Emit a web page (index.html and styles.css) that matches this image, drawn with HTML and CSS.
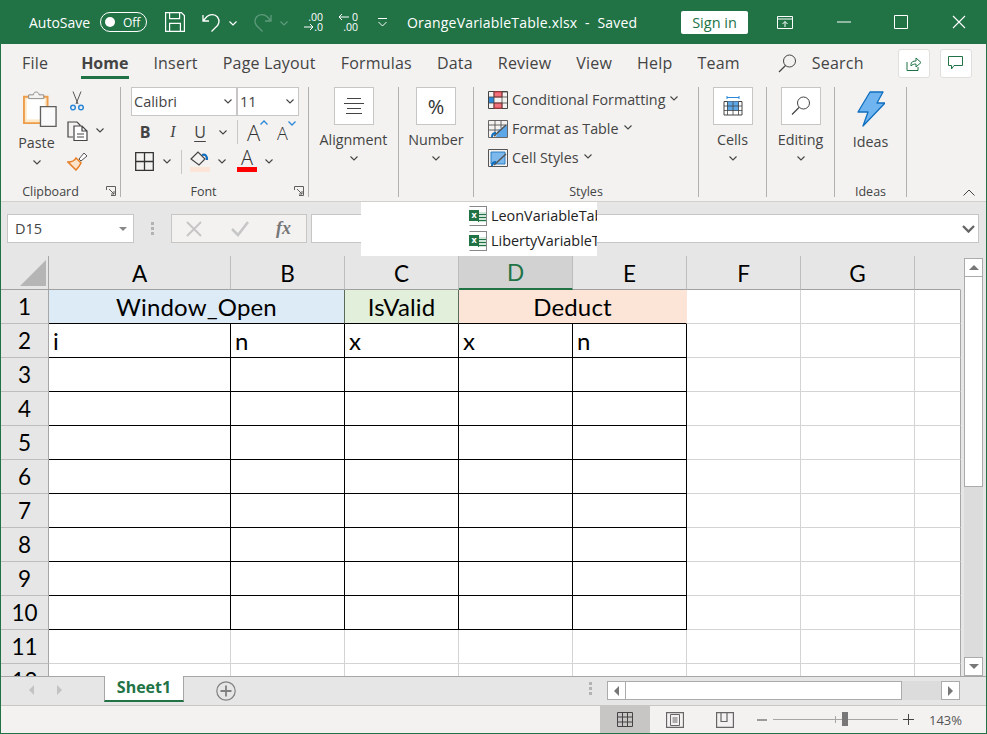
FILE: index.html
```html
<!DOCTYPE html>
<html lang="en">
<head>
<meta charset="utf-8">
<title>OrangeVariableTable.xlsx - Saved</title>
<link rel="stylesheet" href="styles.css">
</head>
<body>
<div class="app">
  <header class="titlebar">
    <span class="autosave">AutoSave</span>
    <span class="toggle"><i class="toggle-dot"></i><span>Off</span></span>
    <svg class="qa-save" width="20" height="20" viewBox="0 0 20 20" fill="none" stroke="#fff" stroke-width="1.2"><path d="M.6.6h15.8l3 3v15.8H.6zM4.6.6v6h10v-6M4.6 19.4v-8h10.800v8"/></svg>
    <svg class="qa-undo" width="19" height="20" viewBox="0 0 19 20" fill="none" stroke="#fff" stroke-width="1.3"><path d="M1 3v6h6M1.500 8.500 5 4.500C8 2 13 2 15.500 5c3 4 1 8-1.500 10l-4.500 4.500"/></svg>
    <svg class="chev-qa" width="8" height="5" viewBox="0 0 8 5" fill="none" stroke="#fff" stroke-width="1.200"><path d="M.5.5 4 4 7.500.5"/></svg>
    <svg class="qa-redo" width="19" height="20" viewBox="0 0 19 20" fill="none" stroke="#5f9a7c" stroke-width="1.300"><path d="M18 3v6h-6M17.500 8.500 14 4.500C11 2 6 2 3.500 5c-3 4-1 8 1.500 10l4.500 4.500"/></svg>
    <svg class="chev-qa" width="8" height="5" viewBox="0 0 8 5" fill="none" stroke="#5f9a7c" stroke-width="1.200"><path d="M.5.5 4 4 7.500.5"/></svg>
    <span class="qa-dec qa-dec1">
      <span class="qa-line">.00</span>
      <span class="qa-line"><svg width="10" height="8" viewBox="0 0 10 8" fill="none" stroke="#fff"><path d="M0 4h9M6 1l3 3-3 3"/></svg>.0</span>
    </span>
    <span class="qa-dec qa-dec2">
      <span class="qa-line"><svg width="11" height="8" viewBox="0 0 11 8" fill="none" stroke="#fff"><path d="M11 4H1M4 1 1 4l3 3"/></svg>&nbsp;0</span>
      <span class="qa-line">.00</span>
    </span>
    <svg class="qa-more" width="11" height="9" viewBox="0 0 11 9" fill="none" stroke="#fff"><path d="M1 .5h9M1.500 4l4 4 4-4"/></svg>
    <span class="doc-title">OrangeVariableTable.xlsx&nbsp; - &nbsp;Saved</span>
    <span class="signin">Sign in</span>
    <svg class="win-ribbon" width="16" height="13" viewBox="0 0 16 13" fill="none" stroke="#fff"><path d="M.5.500h15v12H.5zM.5 3h15M8 11V5.500M5.500 8 8 5.500 10.500 8"/></svg>
    <svg class="win-min" width="14" height="2" viewBox="0 0 14 2"><path d="M0 1h14" stroke="#fff"/></svg>
    <svg class="win-max" width="14" height="14" viewBox="0 0 14 14" fill="none" stroke="#fff"><path d="M.5.500h13v13H.5z"/></svg>
    <svg class="win-close" width="14" height="14" viewBox="0 0 14 14" fill="none" stroke="#fff" stroke-width="1.100"><path d="m1 1 12 12M13 1 1 13"/></svg>
  </header>

  <nav class="tabs">
    <span class="tab tab-file">File</span>
    <span class="tab tab-on">Home</span>
    <span class="tab">Insert</span>
    <span class="tab">Page Layout</span>
    <span class="tab">Formulas</span>
    <span class="tab">Data</span>
    <span class="tab">Review</span>
    <span class="tab">View</span>
    <span class="tab">Help</span>
    <span class="tab">Team</span>
    <svg class="tab-search-ic" width="19" height="19" viewBox="0 0 19 19" fill="none" stroke="#444"><circle cx="11.500" cy="7" r="6"/><path d="M7.500 11.500 1 18" stroke-width="1.300"/></svg>
    <span class="tab tab-search">Search</span>
    <span class="tab-btn tab-btn-share"><svg width="16" height="15" viewBox="0 0 16 15" fill="none" stroke="#217346"><path d="M1 6v8.500h11V11M5 10V8.500C5 6 7 5 10 5V2l5 4.500-5 4.500V8C8 8 6 8.500 5 10z"/></svg></span>
    <span class="tab-btn"><svg width="15" height="14" viewBox="0 0 15 14" fill="none" stroke="#217346"><path d="M.5.500h14v9H6L3.500 13V9.500h-3z"/></svg></span>
  </nav>

  <section class="ribbon">
    <div class="group g-clip">
      <div class="gbody clip-body">
        <div class="paste">
          <svg class="ic-paste" width="34" height="36" viewBox="0 0 36 38"><path d="M1 6h25v28H1z" fill="#fde9c8" stroke="#ed9c4a" stroke-width="2"/><path d="M4 8h19v22H4z" fill="#fff"/><path d="M6 8V4h5c0-4 6-4 6 0h5v4z" fill="#f3f2f1" stroke="#8a8886"/><path d="M18.500 16.500h16.500v21H18.500z" fill="#fafafa" stroke="#605e5c" stroke-width="1.400"/></svg>
          <span class="rtext paste-text">Paste</span>
          <svg class="chev" width="8" height="5" viewBox="0 0 8 5"><path d="M.5.500 4 4 7.500.500"/></svg>
        </div>
        <div class="clip-tools">
          <svg class="ic-cut" width="14" height="20" viewBox="0 0 14 20" fill="none"><path d="M3 .5 8 13M11 .5 6 13" stroke="#555"/><circle cx="3" cy="16.500" r="2.300" stroke="#2b88d8" stroke-width="1.500"/><circle cx="11" cy="16.500" r="2.300" stroke="#2b88d8" stroke-width="1.500"/></svg>
          <div class="copy-row">
            <svg width="21" height="20" viewBox="0 0 21 20" fill="#f3f2f1" stroke="#444" stroke-width="1.200"><path d="M6 16H1V1h9l3 3v3"/><path d="M7 5h8l5 5v9.500H7zM15 5v5h5" fill="#fff"/><path d="M10 13h7M10 16h7" stroke-width="1"/></svg>
            <svg class="chev" width="8" height="5" viewBox="0 0 8 5"><path d="M.5.500 4 4 7.500.500"/></svg>
          </div>
          <svg width="21" height="20" viewBox="0 0 21 20"><path d="M1 11c4 0 7-2 8-4l5 5c-1 2-3 5-5 7z" fill="#fbe3cc" stroke="#e8802a" stroke-width="1.600"/><path d="m12 8 5-6 3 3-6 5z" fill="#fff" stroke="#555"/></svg>
        </div>
      </div>
      <div class="glabel-row">
        <span class="glabel">Clipboard</span>
        <svg class="launcher" width="10" height="10" viewBox="0 0 10 10" fill="none" stroke="#605e5c"><path d="M.5 4V.5H9.500V9.500H5M3 3l5 5M8 5v3H5"/></svg>
      </div>
    </div>

    <div class="group g-font">
      <div class="gbody font-body">
        <div class="font-row1">
          <span class="select sel-name">Calibri<svg class="chev" width="8" height="5" viewBox="0 0 8 5"><path d="M.5.500 4 4 7.500.500"/></svg></span>
          <span class="select sel-size">11<svg class="chev" width="8" height="5" viewBox="0 0 8 5"><path d="M.5.500 4 4 7.500.500"/></svg></span>
        </div>
        <div class="font-row2">
          <span class="ft ft-b">B</span>
          <span class="ft ft-i">I</span>
          <span class="ft ft-u">U</span>
          <span class="ft-chev"><svg class="chev" width="8" height="5" viewBox="0 0 8 5"><path d="M.5.500 4 4 7.500.500"/></svg></span>
          <i class="vsep vsep-a"></i>
          <span class="ft-grow">A<svg width="8" height="5" viewBox="0 0 8 5" fill="none" stroke="#2b88d8" stroke-width="1.300"><path d="M.5 4.500 4 1l3.500 3.500"/></svg></span>
          <span class="ft-shrink">A<svg width="8" height="5" viewBox="0 0 8 5" fill="none" stroke="#2b88d8" stroke-width="1.300"><path d="M.5.500 4 4 7.500.500"/></svg></span>
        </div>
        <div class="font-row3">
          <svg class="ic-border" width="19" height="19" viewBox="0 0 19 19" fill="none" stroke="#333" stroke-width="1.300"><path d="M.7.700h17.600v17.600H.7zM9.500.7v17.600M.7 9.500h17.600"/></svg>
          <span class="ft-chev ch-border"><svg class="chev" width="8" height="5" viewBox="0 0 8 5"><path d="M.5.500 4 4 7.500.500"/></svg></span>
          <i class="vsep vsep-b"></i>
          <svg class="ic-fill" width="20" height="21" viewBox="0 0 20 21"><path d="m1 8 7-7 7 7-6 6z" fill="#f3f2f1" stroke="#444" stroke-width="1.200"/><path d="M12 4c3-1 5 0 5 5" fill="none" stroke="#106ebe" stroke-width="2.200"/><path d="M0 16h20v5H0z" fill="#fce4d6"/></svg>
          <span class="ft-chev ch-fill"><svg class="chev" width="8" height="5" viewBox="0 0 8 5"><path d="M.5.500 4 4 7.500.500"/></svg></span>
          <span class="ft-color">A<i class="color-bar"></i></span>
          <span class="ft-chev ch-color"><svg class="chev" width="8" height="5" viewBox="0 0 8 5"><path d="M.5.500 4 4 7.500.500"/></svg></span>
        </div>
      </div>
      <div class="glabel-row">
        <span class="glabel">Font</span>
        <svg class="launcher launcher-font" width="10" height="10" viewBox="0 0 10 10" fill="none" stroke="#605e5c"><path d="M.5 4V.5H9.500V9.500H5M3 3l5 5M8 5v3H5"/></svg>
      </div>
    </div>

    <div class="group g-align stack">
      <span class="bigbtn"><svg width="20" height="16" viewBox="0 0 20 16" stroke="#444"><path d="M3 .5h14M0 5.500h20M3 10.500h14M2 15.500h16"/></svg></span>
      <span class="rtext big-text">Alignment</span>
      <svg class="chev" width="8" height="5" viewBox="0 0 8 5"><path d="M.5.500 4 4 7.500.500"/></svg>
    </div>

    <div class="group g-num stack">
      <span class="bigbtn percent">%</span>
      <span class="rtext big-text">Number</span>
      <svg class="chev" width="8" height="5" viewBox="0 0 8 5"><path d="M.5.500 4 4 7.500.500"/></svg>
    </div>

    <div class="group g-styles">
      <div class="gbody styles-body">
        <div class="style-row">
          <svg width="20" height="18" viewBox="0 0 20 18" fill="none"><path d="M.5.500h19v17H.5z" stroke="#444"/><path d="M6 1h8v5H6zM6 12h8v5H6z" fill="#f1707b" stroke="#d13438"/><path d="M1 6h5v6H1z" fill="#2b88d8"/><path d="M14 1h5M1 6h18M1 12h18M6 1v16M14 1v16" stroke="#444" stroke-width=".8"/></svg>
          <span class="rtext">Conditional Formatting</span>
          <svg class="chev" width="8" height="5" viewBox="0 0 8 5"><path d="M.5.500 4 4 7.500.500"/></svg>
        </div>
        <div class="style-row">
          <svg width="20" height="18" viewBox="0 0 20 18" fill="none"><path d="M.5.500h19v17H.5zM.5 5h19M.5 10h12M7 .5v16M13 .5V8" stroke="#555" stroke-width=".9"/><path d="M10 10l9-5v12H8z" fill="#5ca7e8"/><path d="m6 16 12-11" stroke="#555" stroke-width="1.500"/><path d="M4 17c0-3 2-4 4-4" stroke="#106ebe" stroke-width="2"/></svg>
          <span class="rtext">Format as Table</span>
          <svg class="chev" width="8" height="5" viewBox="0 0 8 5"><path d="M.5.500 4 4 7.500.500"/></svg>
        </div>
        <div class="style-row">
          <svg width="20" height="18" viewBox="0 0 20 18" fill="none"><path d="M.5.500h19v17H.5z" stroke="#555"/><path d="M3 3h14v12H3z" fill="#7db8ec" stroke="#106ebe" stroke-width=".8"/><path d="m6 16 12-11" stroke="#555" stroke-width="1.500"/><path d="M4 17c0-3 2-4 4-4" stroke="#106ebe" stroke-width="2"/></svg>
          <span class="rtext">Cell Styles</span>
          <svg class="chev" width="8" height="5" viewBox="0 0 8 5"><path d="M.5.500 4 4 7.500.500"/></svg>
        </div>
      </div>
      <div class="glabel-row"><span class="glabel">Styles</span></div>
    </div>

    <div class="group g-small stack">
      <span class="bigbtn"><svg width="20" height="20" viewBox="0 0 20 20" fill="none"><path d="M1 5.500h18v13.500H1z" stroke="#444"/><path d="M4 5.500h12v9H4z" fill="#5ca7e8"/><path d="M1 10h18M1 14.500h18M4.500 5.500V19M10 5.500V19M15.500 5.500V19" stroke="#444" stroke-width=".8"/><path d="M4 1.500h12M4 0v3M16 0v3" stroke="#2b88d8"/></svg></span>
      <span class="rtext big-text">Cells</span>
      <svg class="chev" width="8" height="5" viewBox="0 0 8 5"><path d="M.5.500 4 4 7.500.500"/></svg>
    </div>

    <div class="group g-small stack">
      <span class="bigbtn"><svg width="20" height="20" viewBox="0 0 20 20" fill="none" stroke="#444"><circle cx="12.500" cy="7" r="6"/><path d="M8 11.500 1 18.500" stroke-width="1.300"/></svg></span>
      <span class="rtext big-text">Editing</span>
      <svg class="chev" width="8" height="5" viewBox="0 0 8 5"><path d="M.5.500 4 4 7.500.500"/></svg>
    </div>

    <div class="group g-ideas">
      <div class="gbody ideas-body">
        <svg width="28" height="36" viewBox="0 0 28 36"><path d="M13 1h13l-6 11h8L6 35l5-14H1z" fill="#71b5f0" stroke="#106ebe" stroke-width="1.300" stroke-linejoin="round"/></svg>
        <span class="rtext ideas-text">Ideas</span>
      </div>
      <div class="glabel-row"><span class="glabel">Ideas</span></div>
    </div>
    <svg class="collapse" width="12" height="7" viewBox="0 0 12 7" fill="none" stroke="#444"><path d="m.5 6.500 5.500-5.500 5.500 5.500"/></svg>
  </section>

  <section class="formula">
    <div class="namebox"><span>D15</span><i class="tri-down"></i></div>
    <div class="fdots"><i></i><i></i><i></i></div>
    <div class="fbtns">
      <svg width="16" height="16" viewBox="0 0 16 16" stroke="#c6c6c6" stroke-width="2"><path d="m1 1 14 14M15 1 1 15"/></svg>
      <svg width="18" height="16" viewBox="0 0 18 16" fill="none" stroke="#c6c6c6" stroke-width="2.500"><path d="m1 8 6 6L17 1"/></svg>
      <span class="fx">fx</span>
    </div>
    <div class="finput"><svg width="13" height="8" viewBox="0 0 13 8" fill="none" stroke="#666" stroke-width="2.400"><path d="m1 1 5.500 5.500L12 1"/></svg></div>
    <div class="file-pop">
      <div class="file-row"><span class="xl-ic"><span class="xl-x">x</span></span><span class="file-name">LeonVariableTable.xlsx</span></div>
      <div class="file-row"><span class="xl-ic"><span class="xl-x">x</span></span><span class="file-name">LibertyVariableTable.xlsx</span></div>
    </div>
  </section>

  <section class="sheet-area">
    <div class="grid">
      <div class="corner"><i class="corner-tri"></i></div>
      <div class="ch">A</div><div class="ch">B</div><div class="ch">C</div><div class="ch ch-sel">D</div><div class="ch">E</div><div class="ch">F</div><div class="ch">G</div><div class="ch ch-last"></div>

      <div class="rh">1</div>
      <div class="c head span2 blue">Window_Open</div><div class="c head green">IsValid</div><div class="c head span2 peach">Deduct</div><div class="c"></div><div class="c"></div><div class="c l"></div>

      <div class="rh">2</div>
      <div class="c k">i</div><div class="c k">n</div><div class="c k">x</div><div class="c k">x</div><div class="c k">n</div><div class="c"></div><div class="c"></div><div class="c l"></div>

      <div class="rh">3</div>
      <div class="c k"></div><div class="c k"></div><div class="c k"></div><div class="c k"></div><div class="c k"></div><div class="c"></div><div class="c"></div><div class="c l"></div>
      <div class="rh">4</div>
      <div class="c k"></div><div class="c k"></div><div class="c k"></div><div class="c k"></div><div class="c k"></div><div class="c"></div><div class="c"></div><div class="c l"></div>
      <div class="rh">5</div>
      <div class="c k"></div><div class="c k"></div><div class="c k"></div><div class="c k"></div><div class="c k"></div><div class="c"></div><div class="c"></div><div class="c l"></div>
      <div class="rh">6</div>
      <div class="c k"></div><div class="c k"></div><div class="c k"></div><div class="c k"></div><div class="c k"></div><div class="c"></div><div class="c"></div><div class="c l"></div>
      <div class="rh">7</div>
      <div class="c k"></div><div class="c k"></div><div class="c k"></div><div class="c k"></div><div class="c k"></div><div class="c"></div><div class="c"></div><div class="c l"></div>
      <div class="rh">8</div>
      <div class="c k"></div><div class="c k"></div><div class="c k"></div><div class="c k"></div><div class="c k"></div><div class="c"></div><div class="c"></div><div class="c l"></div>
      <div class="rh">9</div>
      <div class="c k"></div><div class="c k"></div><div class="c k"></div><div class="c k"></div><div class="c k"></div><div class="c"></div><div class="c"></div><div class="c l"></div>
      <div class="rh">10</div>
      <div class="c k"></div><div class="c k"></div><div class="c k"></div><div class="c k"></div><div class="c k"></div><div class="c"></div><div class="c"></div><div class="c l"></div>
      <div class="rh">11</div>
      <div class="c"></div><div class="c"></div><div class="c"></div><div class="c"></div><div class="c"></div><div class="c"></div><div class="c"></div><div class="c l"></div>
      <div class="rh">12</div>
      <div class="c"></div><div class="c"></div><div class="c"></div><div class="c"></div><div class="c"></div><div class="c"></div><div class="c"></div><div class="c l"></div>
    </div>
    <div class="vscroll">
      <span class="sbtn sbtn-v"><i class="tri-up"></i></span>
      <span class="vthumb"></span>
      <span class="vtrack"></span>
      <span class="sbtn sbtn-v"><i class="tri-down"></i></span>
    </div>
  </section>

  <section class="sheetbar">
    <div class="nav-arrows"><i class="tri-left dim"></i><i class="tri-right dim"></i></div>
    <div class="sheet-tab">Sheet1</div>
    <svg class="add-sheet" width="20" height="20" viewBox="0 0 20 20" fill="none" stroke="#808080"><circle cx="10" cy="10" r="9.200" stroke-width="1.200"/><path d="M10 4.500v11M4.500 10h11" stroke-width="1.800"/></svg>
    <div class="sdots"><i></i><i></i><i></i></div>
    <div class="hscroll">
      <span class="sbtn sbtn-h"><i class="tri-left"></i></span>
      <span class="hthumb"></span>
      <span class="htrack"></span>
      <span class="sbtn sbtn-h"><i class="tri-right"></i></span>
    </div>
  </section>

  <footer class="status">
    <span class="view view-on"><svg width="16" height="15" viewBox="0 0 16 15" fill="none" stroke="#444"><path d="M.5.500h15v14H.5zM.5 5h15M.5 10h15M5.500.5v14M10.500.5v14"/></svg></span>
    <span class="view"><svg width="18" height="16" viewBox="0 0 18 16" fill="none" stroke="#666"><path d="M.5.500h17v15H.5z" stroke-width="1.300"/><path d="M4.500 2.500h9v11h-9zM6.500 6h5M6.500 8h5M6.500 10h5"/></svg></span>
    <span class="view"><svg width="18" height="16" viewBox="0 0 18 16" fill="none" stroke="#666" stroke-width="1.200"><path d="M.6.600h16.800v14.800H.6zM5 .6V9.500h6V.6"/></svg></span>
    <svg class="zoom-minus" width="10" height="2" viewBox="0 0 10 2"><path d="M0 1h10" stroke="#444"/></svg>
    <span class="slider"><i class="slider-tick"></i><i class="slider-thumb"></i></span>
    <svg class="zoom-plus" width="11" height="11" viewBox="0 0 11 11" stroke="#444"><path d="M0 5.500h11M5.500 0v11"/></svg>
    <span class="zoom-val">143%</span>
  </footer>
</div>
</body>
</html>
```
FILE: styles.css
```css
* { box-sizing: border-box; }
html, body { margin: 0; height: 100%; }
body { font-family: "Open Sans", "Noto Sans", sans-serif; color: #444; overflow: hidden; }
i { display: block; font-style: normal; }
svg { display: block; flex: none; }

.app {
  width: 987px; height: 734px; display: flex; flex-direction: column;
  border: 1px solid #217346; border-top: 0; background: #f3f2f1; overflow: hidden; position: relative;
}

/* title bar */
.titlebar {
  height: 44px; flex: none; margin: 0 -1px; background: #217346; color: #fff;
  display: flex; align-items: center; font-size: 14px;
}
.autosave { margin-left: 29px; width: 64px; white-space: nowrap; }
.toggle {
  margin-left: 7px; width: 47px; height: 20px; border: 1px solid #fff; border-radius: 10px;
  display: flex; align-items: center; font-size: 12px;
}
.toggle-dot { width: 10px; height: 10px; border-radius: 50%; background: #fff; margin: 0 8px 0 4px; }
.qa-save { margin-left: 18px; }
.qa-undo { margin-left: 17px; }
.chev-qa { margin-left: 8px; margin-top: 2px; }
.qa-redo { margin-left: 16px; }
.qa-dec { width: 21px; height: 20px; display: flex; flex-direction: column; font-size: 10.500px; line-height: 10px; align-items: flex-end; }
.qa-dec1 { margin-left: 14px; }
.qa-dec2 { margin-left: 14px; }
.qa-line { display: flex; align-items: center; height: 10px; white-space: pre; }
.qa-more { margin-left: 19px; }
.doc-title { margin-left: 19px; width: 274px; white-space: nowrap; letter-spacing: .2px; }
.signin {
  width: 67px; height: 23px; background: #fff; color: #217346; border-radius: 2px;
  display: flex; align-items: center; justify-content: center; font-size: 14.500px;
}
.win-ribbon { margin-left: 29px; }
.win-min { margin-left: 44px; }
.win-max { margin-left: 43px; }
.win-close { margin-left: 44px; }

/* tabs */
.tabs { height: 38px; flex: none; display: flex; align-items: center; padding-left: 21px; font-size: 16px; letter-spacing: .2px; color: #444; position: relative; }
.tab { margin-right: 25px; white-space: nowrap; }
.tab-file { margin-right: 33px; }
.tab-on { font-weight: 700; letter-spacing: 0; position: relative; }
.tab-on::after { content: ""; position: absolute; left: 0; right: -1px; bottom: -5px; height: 3px; background: #217346; }
.tab-search-ic { margin-left: 13px; }
.tab-search { margin-left: 15px; width: 51px; margin-right: 35px; }
.tab-btn {
  width: 32px; height: 29px; margin-right: 10px; background: #fff; border: 1px solid #e1dfdd; border-radius: 3px;
  display: flex; align-items: center; justify-content: center;
}

/* ribbon */
.ribbon { height: 120px; flex: none; display: flex; align-items: flex-start; padding-top: 5px; border-bottom: 1px solid #d2d0ce; position: relative; }
.group { height: 110px; border-right: 1px solid #b3b0ad; display: flex; flex-direction: column; flex: none; }
.gbody { flex: 1; min-height: 0; }
.glabel-row { height: 12px; display: flex; align-items: center; }
.glabel { flex: 1; text-align: center; font-size: 12.500px; color: #444; white-space: nowrap; }
.launcher { margin-right: 4px; margin-left: 6px; }
.launcher-font { margin-left: 18px; }
.rtext { font-size: 14.300px; color: #444; white-space: nowrap; line-height: 18px; }
.chev { fill: none; stroke: #444; stroke-width: 1.100; }

.g-clip { width: 120px; }
.clip-body { display: flex; padding-left: 16.500px; }
.paste { width: 38px; display: flex; flex-direction: column; align-items: center; padding-top: 4px; }
.ic-paste { align-self: flex-start; margin-left: 5.500px; }
.paste-text { margin-top: 7px; }
.paste .chev { margin-top: 8px; }
.clip-tools { margin-left: 11.500px; display: flex; flex-direction: column; align-items: flex-start; padding-top: 4px; }
.ic-cut { margin-left: 3px; }
.copy-row { display: flex; align-items: center; margin-top: 10px; margin-bottom: 10px; }
.copy-row .chev { margin-left: 8px; margin-top: -2px; }

.g-font { width: 188px; padding-left: 10px; }
.font-row1 { display: flex; height: 29px; }
.select {
  background: #fff; border: 1px solid #c8c6c4; height: 29px; display: flex; align-items: center; justify-content: space-between;
  padding: 0 4px 0 2px; font-size: 14.500px; color: #444;
}
.sel-name { width: 106px; }
.sel-size { width: 62px; }
.font-row2 { display: flex; align-items: center; height: 26px; margin-top: 3px; }
.font-row3 { display: flex; align-items: center; height: 27px; margin-top: 3px; }
.ft { width: 28px; text-align: center; font-size: 16px; color: #444; line-height: 20px; }
.ft-b { font-weight: 700; }
.ft-i { font-style: italic; font-family: "Liberation Serif", serif; }
.ft-u { width: 26px; text-decoration: underline; text-underline-offset: 3px; }
.ft-chev { width: 20px; display: flex; justify-content: center; }
.vsep { width: 1px; height: 24px; background: #c8c6c4; }
.vsep-a { margin-left: 4px; margin-right: 9px; }
.ft-grow, .ft-shrink { display: flex; align-items: flex-start; color: #333; line-height: 24px; font-weight: 300; }
.ft-grow { font-size: 22px; width: 30px; }
.ft-shrink { font-size: 18px; padding-top: 2px; width: 26px; }
.ic-border { margin-left: 4px; }
.ch-border { width: 17px; margin-left: 4px; }
.vsep-b { margin-left: 6px; margin-right: 8px; }
.ic-fill { margin-left: 0; }
.ch-fill { width: 22px; margin-left: 1px; }
.ft-color { width: 20px; margin: -4px 0 0 4px; text-align: center; font-size: 20px; font-weight: 300; line-height: 19px; color: #333; }
.color-bar { height: 5px; background: #f00; }
.ch-color { width: 24px; }

.stack { align-items: center; }
.bigbtn {
  width: 40px; height: 38px; background: #fff; border: 1px solid #c8c6c4; display: flex; align-items: center; justify-content: center; flex: none;
}
.percent { font-size: 20px; color: #333; }
.big-text { margin-top: 6px; }
.stack .chev { margin-top: 7px; }
.g-align { width: 90px; }
.g-num { width: 75px; }
.g-small { width: 68px; }

.g-styles { width: 225px; }
.styles-body { padding-left: 14px; display: flex; flex-direction: column; margin-top: -2px; }
.style-row { display: flex; align-items: center; height: 29px; flex: none; }
.style-row .rtext { margin-left: 4px; }
.style-row .chev { margin-left: 5px; margin-top: -2px; }

.g-ideas { width: 72px; }
.ideas-body { display: flex; flex-direction: column; align-items: center; padding-top: 4px; }
.ideas-text { margin-top: 6px; }
.collapse { position: absolute; right: 11px; top: 107px; }

/* formula bar */
.formula { height: 54px; flex: none; background: #e6e6e6; display: flex; align-items: flex-start; padding: 12px 0 0 6px; position: relative; }
.namebox {
  width: 127px; height: 29px; background: #fff; border: 1px solid #c8c6c4; display: flex; align-items: center; justify-content: space-between;
  padding: 0 6px 0 7px; font-size: 14.500px; color: #444;
}
.fdots { width: 37px; height: 29px; display: flex; flex-direction: column; align-items: center; justify-content: center; gap: 2px; }
.fdots i, .sdots i { width: 3px; height: 3px; background: #b3b3b3; }
.fbtns {
  width: 136px; height: 29px; background: #f3f2f1; border: 1px solid #c8c6c4; display: flex; align-items: center; padding-left: 14px;
}
.fbtns svg:nth-child(2) { margin-left: 29px; }
.fx { margin-left: 27px; font: italic 700 18px "Liberation Serif", serif; color: #777; }
.finput {
  margin-left: 4px; width: 668px; height: 29px; background: #fff; border: 1px solid #c8c6c4; display: flex; align-items: center; justify-content: flex-end; padding-right: 3px;
}
.file-pop {
  position: absolute; left: 360px; top: 0; width: 236px; height: 54px; background: #fff; padding-left: 108px;
  display: flex; flex-direction: column; justify-content: center; gap: 5px; overflow: hidden;
}
.file-row { display: flex; align-items: center; gap: 4px; height: 21px; margin-top: -1px; }
.file-name { font-size: 14.400px; color: #222; white-space: nowrap; line-height: 18px; }
.xl-ic {
  width: 18px; height: 20px; flex: none; position: relative; margin-left: 0;
  background: linear-gradient(#217346, #217346) 8px 5px / 1px 10px no-repeat,
    repeating-linear-gradient(#cfe6d9 0 2px, #217346 2px 3px) 9px 5px / 7px 10px no-repeat, #fff;
  border: 1px solid #888; border-left-color: transparent; background-clip: padding-box;
}
.xl-x {
  position: absolute; left: -1px; top: 3px; width: 10px; height: 11px; background: #217346; color: #fff;
  font-size: 9px; font-weight: 700; line-height: 10px; text-align: center;
}

/* sheet */
.sheet-area { height: 420px; flex: none; display: flex; background: #e6e6e6; overflow: hidden; }
.grid {
  width: 960px; display: grid; flex: none;
  grid-template-columns: 48px 182px 114px 114px 114px 114px 114px 114px 46px;
  grid-auto-rows: 34px; background: #fff;
  font-family: "Lato", "Open Sans", sans-serif; font-size: 22.500px; color: #000;
}
.corner { background: #e6e6e6; border-right: 1px solid #a6a6a6; border-bottom: 1px solid #a0a0a0; display: flex; align-items: flex-end; justify-content: flex-end; padding: 0 2px 3px 0; }
.corner-tri { width: 0; height: 0; border-style: solid; border-width: 0 0 26px 26px; border-color: transparent transparent #b5b5b5 transparent; }
.ch {
  background: #e6e6e6; border-right: 1px solid #bdbdbd; border-bottom: 1px solid #a0a0a0;
  display: flex; align-items: center; justify-content: center; padding-top: 1px;
}
.ch-sel { background: #d2d2d2; color: #217346; border-bottom: 2px solid #217346; }
.ch-last { border-right: 1px solid #e6e6e6; }
.rh {
  background: #e6e6e6; border-right: 1px solid #a6a6a6; border-bottom: 1px solid #bdbdbd;
  display: flex; align-items: center; justify-content: center;
}
.c { border-right: 1px solid #d4d4d4; border-bottom: 1px solid #d4d4d4; display: flex; align-items: center; padding-left: 4px; line-height: 1; font-size: 24px; }
.l { border-right: 1px solid #a6a6a6; }
.k { border-color: #000; }
.head { border-bottom-color: #000; border-right-color: #5b6b5b; justify-content: center; padding-left: 0; letter-spacing: .15px; }
.span2 { grid-column: span 2; }
.blue { background: #ddebf7; }
.green { background: #e2efda; }
.peach { background: #fce4d6; border-right-color: #fce4d6; }

/* scrollbars */
.vscroll { width: 19px; margin: 2px 0 0 3px; display: flex; flex-direction: column; flex: none; }
.sbtn { background: #fff; border: 1px solid #ababab; display: flex; align-items: center; justify-content: center; flex: none; }
.sbtn-v { height: 19px; }
.vthumb { height: 210px; background: #fff; border: 1px solid #ababab; border-top: 0; flex: none; }
.vtrack { flex: 1; background: #dcdcdc; }
.tri-up, .tri-down, .tri-left, .tri-right { width: 0; height: 0; border-style: solid; }
.tri-up { border-width: 0 5px 5px; border-color: transparent transparent #777; }
.tri-down { border-width: 5px 5px 0; border-color: #777 transparent transparent; }
.tri-left { border-width: 5px 5px 5px 0; border-color: transparent #777 transparent transparent; }
.tri-right { border-width: 5px 0 5px 5px; border-color: transparent transparent transparent #777; }
.namebox .tri-down { border-width: 4px 4px 0; border-color: #888 transparent transparent; }
.tri-left.dim { border-color: transparent #c2c2c2 transparent transparent; }
.tri-right.dim { border-color: transparent transparent transparent #c2c2c2; }

/* sheet tabs bar */
.sheetbar {
  height: 30px; flex: none; background: #e6e6e6; display: flex; align-items: flex-start;
  border-top: 1px solid #a6a6a6; border-bottom: 1px solid #c8c6c4;
}
.nav-arrows { width: 103px; height: 26px; display: flex; align-items: center; padding-left: 28px; gap: 23px; }
.sheet-tab {
  width: 80px; height: 26px; background: #fff; border: 1px solid #a6a6a6; border-top: 0; border-bottom: 2px solid #217346;
  color: #217346; font-weight: 700; font-size: 16px; text-align: center; line-height: 22px; margin-top: -1px;
}
.add-sheet { margin: 4px 0 0 32px; }
.sdots { margin: 5px 0 0 353px; display: flex; flex-direction: column; gap: 2px; }
.hscroll { margin: 4px 0 0 15px; width: 353px; height: 20px; display: flex; }
.sbtn-h { width: 19px; height: 19px; }
.hthumb { width: 276px; height: 19px; background: #fff; border: 1px solid #ababab; border-left: 0; flex: none; }
.htrack { flex: 1; background: #dcdcdc; height: 19px; }

/* status bar */
.status { flex: 1; display: flex; align-items: center; padding-left: 599px; font-size: 13px; }
.view { width: 50px; height: 27px; display: flex; align-items: center; justify-content: center; }
.view-on { background: #c8c6c4; }
.zoom-minus { margin-left: 7px; }
.slider { width: 125px; height: 1px; background: #a6a6a6; margin-left: 6px; position: relative; }
.slider-tick { position: absolute; left: 62px; top: -3px; width: 1px; height: 7px; background: #a6a6a6; }
.slider-thumb { position: absolute; left: 69px; top: -7px; width: 6px; height: 14px; background: #777; }
.zoom-plus { margin-left: 5px; }
.zoom-val { margin-left: 15px; white-space: nowrap; color: #555; }
```
